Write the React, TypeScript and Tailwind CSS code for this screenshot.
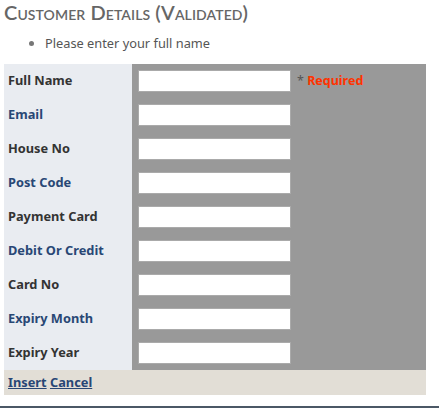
const fields = [
  "Full Name",
  "Email",
  "House No",
  "Post Code",
  "Payment Card",
  "Debit Or Credit",
  "Card No",
  "Expiry Month",
  "Expiry Year",
];

export default function App() {
  return (
    <div className="w-[439px] h-[408px] bg-white overflow-hidden font-['Noto_Sans',sans-serif] text-[12.8px] text-[#333] relative">
      <h2 className="pl-[4px] pt-[1px] h-[24px] font-['Lato',sans-serif] [font-variant:small-caps] text-[20px] leading-[22px] text-[#666] font-semibold tracking-[0.1px]">
        Customer Details (Validated)
      </h2>

      {/* validation summary */}
      <ul className="list-disc pl-[45px] mt-[10px] text-[#555] marker:text-[#777] text-[12.8px] leading-[18px]">
        <li>Please enter your full name</li>
      </ul>

      <table className="ml-[4px] mt-[12px] w-[422px] border-collapse">
        <tbody>
          {fields.map((f, i) => (
            <tr key={f} className="h-[34px] bg-[#999999]">
              <td
                className={`w-[128px] bg-[#E9ECF1] pl-[4px] font-bold ${i % 2 === 0 ? "text-[#333333]" : "text-[#284775]"}`}
              >
                {f}
              </td>
              <td className="pl-[6px]">
                <div className="flex items-center">
                  <input className="w-[153px] h-[22px] bg-white border border-[#aaa] outline-none" />
                  {i === 0 && (
                    <span className="ml-[6px] text-[12.5px]">
                      <span className="text-[#555]">*</span>{" "}
                      <span className="text-[#FF3300] font-bold">Required</span>
                    </span>
                  )}
                </div>
              </td>
            </tr>
          ))}
          <tr className="h-[25px] bg-[#E2DED6]">
            <td colSpan={2} className="pl-[4px] font-bold text-[#284775]">
              <a className="underline" href="#">Insert</a>{" "}
              <a className="underline" href="#">Cancel</a>
            </td>
          </tr>
        </tbody>
      </table>

      <div className="absolute left-0 right-0 top-[406px] h-[2px] bg-[#4b5866]" />
    </div>
  );
}
